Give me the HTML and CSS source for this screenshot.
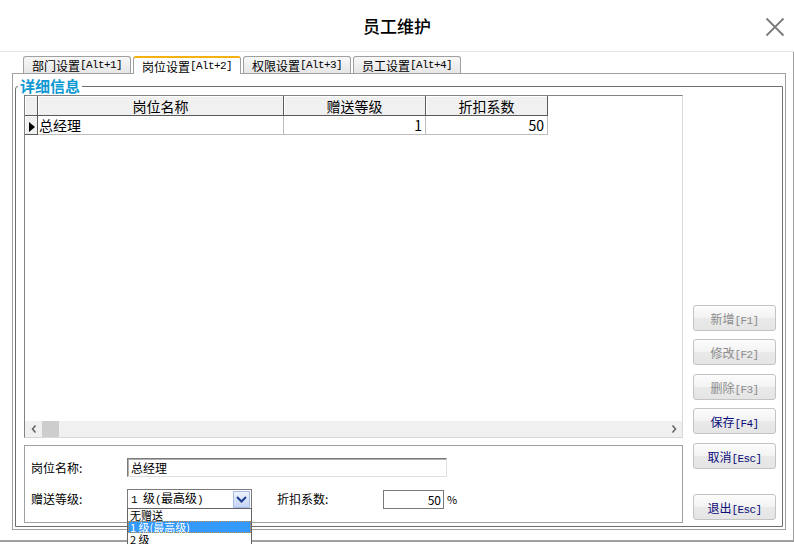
FILE: index.html
```html
<!DOCTYPE html>
<html lang="zh-CN">
<head>
<meta charset="utf-8">
<title>员工维护</title>
<link rel="stylesheet" href="styles.css">
</head>
<body>
<div class="window">
  <header class="titlebar">
    <h1 class="title">员工维护</h1>
    <button class="close" aria-label="关闭">
      <svg width="20" height="20" viewBox="0 0 20 20"><path d="M1.5 1.5 L18.5 18.5 M18.5 1.5 L1.5 18.5" stroke="#7b7b7b" stroke-width="1.8" fill="none"/></svg>
    </button>
  </header>
  <main class="content">
    <nav class="tabs">
      <div class="tab">部门设置<span class="k">[Alt+1]</span></div>
      <div class="tab active">岗位设置<span class="k">[Alt+2]</span></div>
      <div class="tab">权限设置<span class="k">[Alt+3]</span></div>
      <div class="tab">员工设置<span class="k">[Alt+4]</span></div>
    </nav>
    <section class="tabpage">
      <fieldset class="group">
        <legend class="legend">详细信息</legend>
        <div class="group-body">
          <div class="left">
            <div class="grid">
              <div class="table-wrap">
                <table class="table">
                  <thead>
                    <tr><th class="ind c0"></th><th class="c1">岗位名称</th><th class="c2">赠送等级</th><th class="c3">折扣系数</th></tr>
                  </thead>
                  <tbody>
                    <tr><td class="ind"><span class="arrow"></span></td><td>总经理</td><td class="num">1</td><td class="num">50</td></tr>
                  </tbody>
                </table>
              </div>
              <div class="hscroll">
                <div class="sb-btn"><svg width="6" height="8" viewBox="0 0 6 8"><path d="M4.5 0.5 L1.5 4 L4.5 7.5" stroke="#606060" stroke-width="1.5" fill="none"/></svg></div>
                <div class="sb-thumb"></div>
                <div class="sb-track"></div>
                <div class="sb-btn"><svg width="6" height="8" viewBox="0 0 6 8"><path d="M1.5 0.5 L4.5 4 L1.5 7.5" stroke="#606060" stroke-width="1.5" fill="none"/></svg></div>
              </div>
            </div>
            <div class="form">
              <div class="row">
                <span class="lbl">岗位名称:</span>
                <div class="txt">总经理</div>
              </div>
              <div class="row">
                <span class="lbl">赠送等级:</span>
                <div class="combo">
                  <span class="combo-text"><span class="k">1 </span>级<span class="k">(</span>最高级<span class="k">)</span></span>
                  <span class="combo-btn"><svg width="11" height="7" viewBox="0 0 11 7"><path d="M1 1 L5.5 5.5 L10 1" stroke="#1d3f8f" stroke-width="2" fill="none"/></svg></span>
                  <ul class="list">
                    <li class="opt">无赠送</li>
                    <li class="opt sel">1 级(最高级)</li>
                    <li class="opt">2 级</li>
                  </ul>
                </div>
                <span class="lbl2">折扣系数:</span>
                <div class="num-input">50</div>
                <span class="pct">%</span>
              </div>
            </div>
          </div>
          <div class="buttons">
            <button class="btn">新增<span class="k">[F1]</span></button>
            <button class="btn">修改<span class="k">[F2]</span></button>
            <button class="btn">删除<span class="k">[F3]</span></button>
            <button class="btn on">保存<span class="k">[F4]</span></button>
            <button class="btn on">取消<span class="k">[Esc]</span></button>
            <button class="btn on">退出<span class="k">[Esc]</span></button>
          </div>
        </div>
      </fieldset>
    </section>
  </main>
</div>
</body>
</html>
```
FILE: styles.css
```css
* { box-sizing: border-box; }
html, body { margin: 0; padding: 0; background: #fff; }
body {
  width: 794px;
  height: 544px;
  overflow: hidden;
  font-family: "Noto Sans CJK SC", "Noto Sans", sans-serif;
  font-size: 12px;
  color: #000;
}
.window { width: 794px; height: 544px; background: #fff; }

.k {
  font-family: "Liberation Mono", "Noto Sans CJK SC", monospace;
  font-size: 11px;
  letter-spacing: -0.6px;
  white-space: pre;
}

/* title bar */
.titlebar {
  height: 52px;
  border-bottom: 1px solid #e4e4e4;
  display: grid;
  grid-template-columns: 1fr auto 1fr;
  align-items: center;
}
.title {
  grid-column: 2;
  margin: 0;
  font-size: 17px;
  font-weight: 500;
  line-height: 20px;
}
.close {
  grid-column: 3;
  justify-self: end;
  margin-right: 9px;
  margin-top: 2px;
  width: 20px;
  height: 20px;
  padding: 0;
  border: 0;
  background: none;
  display: flex;
}

/* content */
.content {
  display: block;
  height: 490px;
  border-right: 1px solid #a0a0a0;
  border-bottom: 2px solid #a0a0a0;
  padding: 4px 7px 10px 12px;
}
.tabs {
  display: flex;
  gap: 2px;
  padding-left: 11px;
  height: 17px;
}
.tab {
  width: 108px;
  height: 17px;
  border: 1px solid #a0a0a0;
  border-bottom: 0;
  border-radius: 3px 3px 0 0;
  background: linear-gradient(#f8f8f8, #e6e6e6);
  display: flex;
  align-items: center;
  justify-content: center;
  line-height: 15px;
  white-space: nowrap;
}
.tab.active {
  background: #fff;
  height: 18px;
  margin-bottom: -1px;
  border-top: 2px solid #f3b212;
  position: relative;
  z-index: 1;
}

.tabpage {
  height: 457px;
  border: 1px solid #a0a0a0;
  padding: 3px 2px 2px 2px;
}
.group {
  margin: 0;
  padding: 0;
  min-width: 0;
  border: 1px solid #6e6e6e;
  border-radius: 3px 0 0 0;
}
.legend {
  margin-left: 2px;
  padding: 0 2px;
  font-size: 15px;
  font-weight: bold;
  line-height: 18px;
  color: #0c98d2;
}
.group-body {
  display: flex;
  gap: 10px;
  padding: 0 6px 3px 8px;
}
.left { width: 659px; display: flex; flex-direction: column; }

/* data grid */
.grid {
  height: 343px;
  display: flex;
  flex-direction: column;
  border: 1px solid;
  border-color: #828282 #d8d8d8 #d8d8d8 #828282;
  background: #fff;
  margin-bottom: 7px;
}
.table-wrap { flex: 1; overflow: hidden; }
.table {
  border-collapse: separate;
  border-spacing: 0;
  table-layout: fixed;
  width: 523px;
  font-size: 14px;
}
.c0 { width: 13px; }
.c1 { width: 246px; }
.c2 { width: 142px; }
.c3 { width: 122px; }
.table th {
  height: 20px;
  padding: 0;
  font-weight: normal;
  line-height: 18px;
  background: #f0f0f0;
  border-right: 1px solid #5a5a5a;
  border-bottom: 1px solid #5a5a5a;
  box-shadow: inset 1px 1px 0 #fff;
  text-align: center;
}
.table td {
  height: 19px;
  padding: 0 2px 0 1px;
  line-height: 18px;
  border-right: 1px solid #bdbdbd;
  border-bottom: 1px solid #bdbdbd;
  white-space: nowrap;
}
.table td.ind {
  padding: 0;
  background: #f0f0f0;
  border-right-color: #5a5a5a;
  border-bottom-color: #5a5a5a;
  box-shadow: inset 1px 1px 0 #fff;
  text-align: center;
}
.table td.num { text-align: right; padding-right: 3px; }
.arrow {
  display: inline-block;
  vertical-align: middle;
  width: 0;
  height: 0;
  margin-left: 2px;
  border-left: 6px solid #000;
  border-top: 5px solid transparent;
  border-bottom: 5px solid transparent;
}

.hscroll {
  height: 16px;
  display: flex;
  background: #f0f0f0;
}
.sb-btn { width: 17px; display: flex; align-items: center; justify-content: center; }
.sb-thumb { width: 17px; background: #cdcdcd; }
.sb-track { flex: 1; }

/* edit form */
.form {
  height: 78px;
  border: 1px solid #a0a0a0;
  padding: 12px 0 0 6px;
  display: flex;
  flex-direction: column;
  gap: 12px;
}
.row { display: flex; align-items: center; }
.lbl { width: 96px; line-height: 16px; }
.txt {
  width: 320px;
  height: 19px;
  border: 1px solid;
  border-color: #7a7a7a #e0e0e0 #e0e0e0 #7a7a7a;
  box-shadow: inset 1px 1px 0 #b0b0b0;
  padding: 0 3px;
  line-height: 17px;
}
.combo {
  position: relative;
  width: 125px;
  height: 20px;
  border: 1px solid #7a7a7a;
  display: flex;
  align-items: center;
  padding-left: 3px;
}
.combo-text { line-height: 16px; white-space: nowrap; }
.combo-btn {
  margin-left: auto;
  margin-right: 1px;
  width: 17px;
  height: 17px;
  border: 1px solid #a9bde6;
  background: linear-gradient(#eef3fe, #c4d4f5);
  display: flex;
  align-items: center;
  justify-content: center;
}
.list {
  position: absolute;
  left: -1px;
  top: 18px;
  width: 125px;
  margin: 0;
  padding: 0;
  list-style: none;
  border: 1px solid #646464;
  background: #fff;
  z-index: 5;
}
.opt {
  height: 12px;
  font-size: 11px;
  line-height: 12px;
  padding-left: 2px;
  white-space: pre;
}
.opt.sel {
  background: #3399ff;
  color: #fff;
  outline: 1px dotted #c98a44;
  outline-offset: -1px;
}
.lbl2 { margin-left: 25px; width: 106px; line-height: 16px; }
.num-input {
  width: 61px;
  height: 19px;
  border: 1px solid #7a7a7a;
  text-align: right;
  padding-right: 2px;
  line-height: 17px;
}
.pct { margin-left: 3px; font-size: 11px; }

/* buttons */
.buttons {
  width: 83px;
  display: flex;
  flex-direction: column;
  justify-content: flex-end;
  padding-bottom: 3px;
}
.btn {
  height: 26px;
  padding: 0;
  border: 1px solid #c3c3c3;
  border-radius: 3px;
  background: linear-gradient(#fcfcfc 0%, #f3f3f3 48%, #e9e9e9 52%, #e5e5e5 100%);
  font-family: inherit;
  font-size: 12px;
  color: #8c8c8c;
  white-space: nowrap;
}
.btn.on { color: #0b0b7a; }
.btn:nth-child(2) { margin-top: 8px; }
.btn:nth-child(3) { margin-top: 9px; }
.btn:nth-child(4) { margin-top: 8px; }
.btn:nth-child(5) { margin-top: 9px; }
.btn:nth-child(6) { margin-top: 25px; }
```
